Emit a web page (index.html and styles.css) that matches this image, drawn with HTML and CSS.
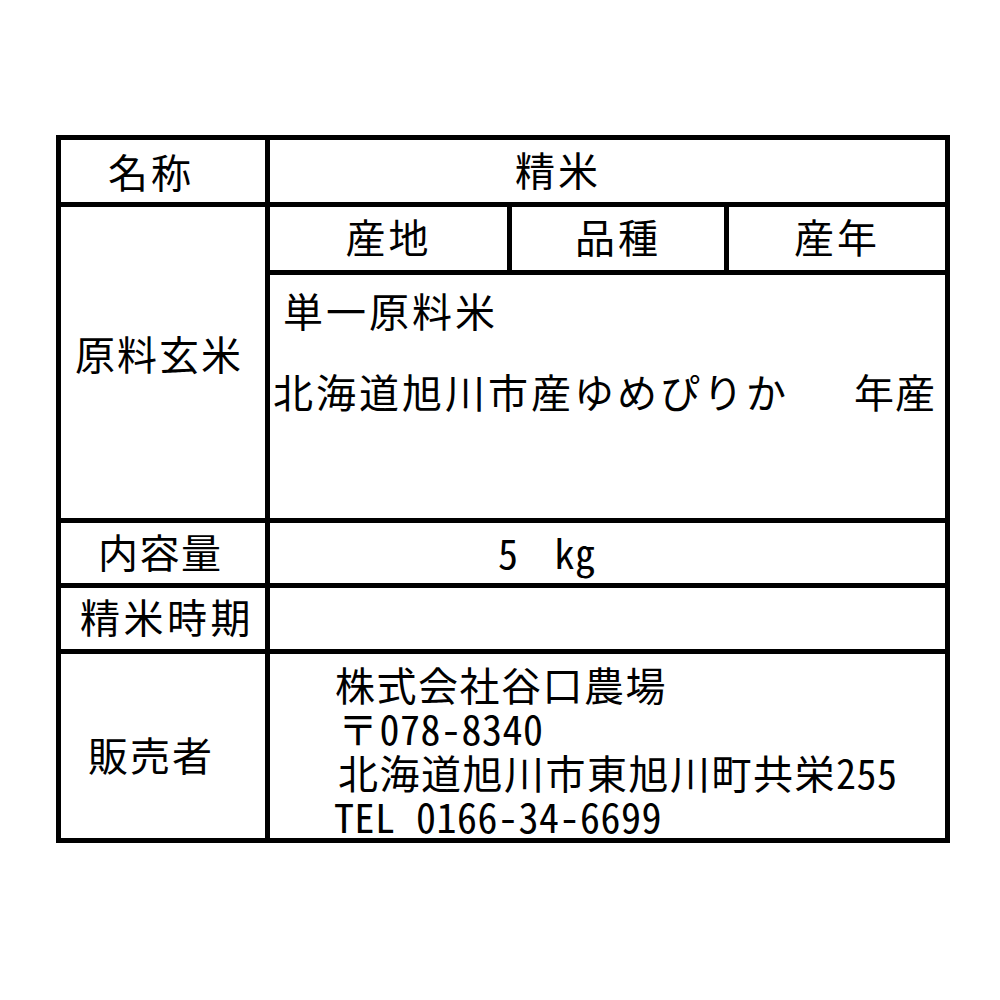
FILE: index.html
```html
<!DOCTYPE html>
<html lang="ja">
<head>
<meta charset="utf-8">
<title>精米 表示</title>
<link rel="stylesheet" href="styles.css">
</head>
<body>
<div class="sheet">
  <div class="label-table">
    <div class="cell label l-name">名称</div>
    <div class="cell value v-name">精米</div>

    <div class="cell label l-raw">原料玄米</div>
    <div class="raw">
      <div class="cell head">産地</div>
      <div class="cell head">品種</div>
      <div class="cell head">産年</div>
      <div class="cell raw-body">
        <p class="raw-line raw-first">単一原料米</p>
        <p class="raw-line raw-second"><span>北海道旭川市産ゆめぴりか</span><span class="raw-year">年産</span></p>
      </div>
    </div>

    <div class="cell label l-amount">内容量</div>
    <div class="cell value v-amount"><span class="hw">5</span><span class="hw kg">kg</span></div>

    <div class="cell label l-date">精米時期</div>
    <div class="cell value"></div>

    <div class="cell label l-seller">販売者</div>
    <div class="cell seller">
      <div class="s-line s1">株式会社谷口農場</div>
      <div class="s-line s2">〒<span class="hw">078-8340</span></div>
      <div class="s-line s3">北海道旭川市東旭川町共栄<span class="hw">255</span></div>
      <div class="s-line s4"><span class="hw">TEL 0166-34-6699</span></div>
    </div>
  </div>
</div>
</body>
</html>
```

FILE: styles.css
```css
html, body {
  margin: 0;
  padding: 0;
  background: #ffffff;
}

body {
  width: 1000px;
  height: 1000px;
  font-family: "Noto Sans CJK JP", "Noto Sans", sans-serif;
  color: #000000;
}

.sheet {
  padding: 135px 0 0 56px;
}

.label-table {
  display: grid;
  box-sizing: border-box;
  width: 894px;
  grid-template-columns: 204px 675px;
  grid-template-rows: 62px 311px 60px 61px 184px;
  gap: 5px;
  padding: 5px;
  background: #000000;
}

.cell {
  background: #ffffff;
  font-size: 40px;
  line-height: 44px;
  letter-spacing: 2px;
  white-space: nowrap;
}

.hw {
  font-feature-settings: "hwid" 1;
  letter-spacing: 0.5px;
}

.label,
.value {
  display: flex;
  align-items: center;
}

.l-name { padding-left: 47px; letter-spacing: 3px; }
.l-raw { padding-left: 14px; padding-bottom: 20px; }
.l-amount { padding-left: 37px; letter-spacing: 1.5px; padding-bottom: 4px; }
.l-date { padding-left: 19px; letter-spacing: 3.5px; padding-bottom: 6px; }
.l-seller { padding-left: 27px; padding-top: 16px; }

.v-name { padding-left: 245px; letter-spacing: 3px; padding-bottom: 4px; }
.v-amount { padding-left: 228px; padding-bottom: 2px; }
.kg { margin-left: 36px; }

.raw {
  display: grid;
  grid-template-columns: 237px 212px 216px;
  grid-template-rows: 63px 243px;
  gap: 5px;
  background: #000000;
}

.head {
  display: flex;
  align-items: center;
  justify-content: center;
  padding-bottom: 6px;
  letter-spacing: 3px;
}

.raw-body {
  grid-column: 1 / 4;
  padding-top: 13px;
}

.raw-line {
  margin: 0;
}

.raw-first {
  padding-left: 13px;
  letter-spacing: 3px;
}

.raw-second {
  margin-top: 37px;
  padding-left: 3px;
  letter-spacing: 3px;
}

.raw-year {
  margin-left: 65px;
  letter-spacing: 1px;
}

.seller {
  padding-top: 8px;
  letter-spacing: 1.5px;
}

.s-line {
  line-height: 44px;
}

.s1 { padding-left: 65px; }
.s2 { padding-left: 68px; }
.s3 { padding-left: 68px; }
.s4 { padding-left: 64px; }
```
